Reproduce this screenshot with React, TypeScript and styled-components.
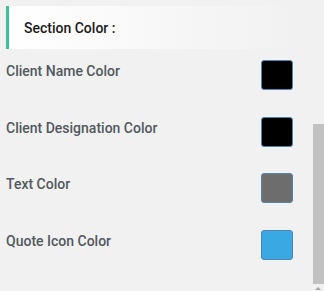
import React from 'react';
import styled, { createGlobalStyle } from 'styled-components';

interface ColorSetting {
  id: string;
  label: string;
  value: string;
}

const GlobalStyle = createGlobalStyle`
  html, body {
    margin: 0;
    padding: 0;
    background: #f1f1f1;
    font-family: Roboto, "Liberation Sans", sans-serif;
  }
`;

const Panel = styled.div`
  position: relative;
  width: 324px;
  height: 291px;
  overflow: hidden;
  box-sizing: border-box;
  padding: 6px 0 0 6px;
`;

const SectionHeader = styled.div`
  width: 291px;
  height: 43px;
  box-sizing: border-box;
  border-left: 3px solid #3dbf9c;
  padding-left: 15px;
  display: flex;
  align-items: center;
  background: linear-gradient(to right, #ffffff 0%, #f7f7f7 55%, #f1f1f1 100%);
  font-size: 14px;
  font-weight: 500;
  color: #1a1a1a;
`;

const SettingList = styled.div`
  display: flex;
  flex-direction: column;
  width: 287px;
  padding-top: 11px;
`;

const SettingRow = styled.div`
  display: flex;
  justify-content: space-between;
  align-items: flex-start;
  height: 56.5px;
`;

const Label = styled.span`
  font-size: 14px;
  font-weight: 500;
  color: #53585e;
  line-height: 18px;
  margin-top: 2px;
`;

const Swatch = styled.div<{ $color: string }>`
  width: 32px;
  height: 30px;
  box-sizing: border-box;
  border-radius: 3px;
  border: 1px solid #4f86b8;
  background: ${(p) => p.$color};
`;

const ScrollThumb = styled.div`
  position: absolute;
  right: 0;
  top: 124px;
  width: 11px;
  height: 160px;
  background: #c1c1c1;
`;

const ScrollArrow = styled.div`
  position: absolute;
  right: 3px;
  top: 287px;
  width: 0;
  height: 0;
  border-left: 3px solid transparent;
  border-right: 3px solid transparent;
  border-bottom: 3px solid #a3a3a3;
`;

const settings: ColorSetting[] = [
  { id: 'name', label: 'Client Name Color', value: '#000000' },
  { id: 'designation', label: 'Client Designation Color', value: '#000000' },
  { id: 'text', label: 'Text Color', value: '#6d6d6d' },
  { id: 'quote', label: 'Quote Icon Color', value: '#3aa8e2' },
];

const App: React.FC = () => {
  return (
    <>
      <GlobalStyle />
      <Panel>
        <SectionHeader>Section Color :</SectionHeader>
        <SettingList>
          {settings.map((setting) => (
            <SettingRow key={setting.id}>
              <Label>{setting.label}</Label>
              <Swatch $color={setting.value} />
            </SettingRow>
          ))}
        </SettingList>
        <ScrollThumb />
        <ScrollArrow />
      </Panel>
    </>
  );
};

export default App;
